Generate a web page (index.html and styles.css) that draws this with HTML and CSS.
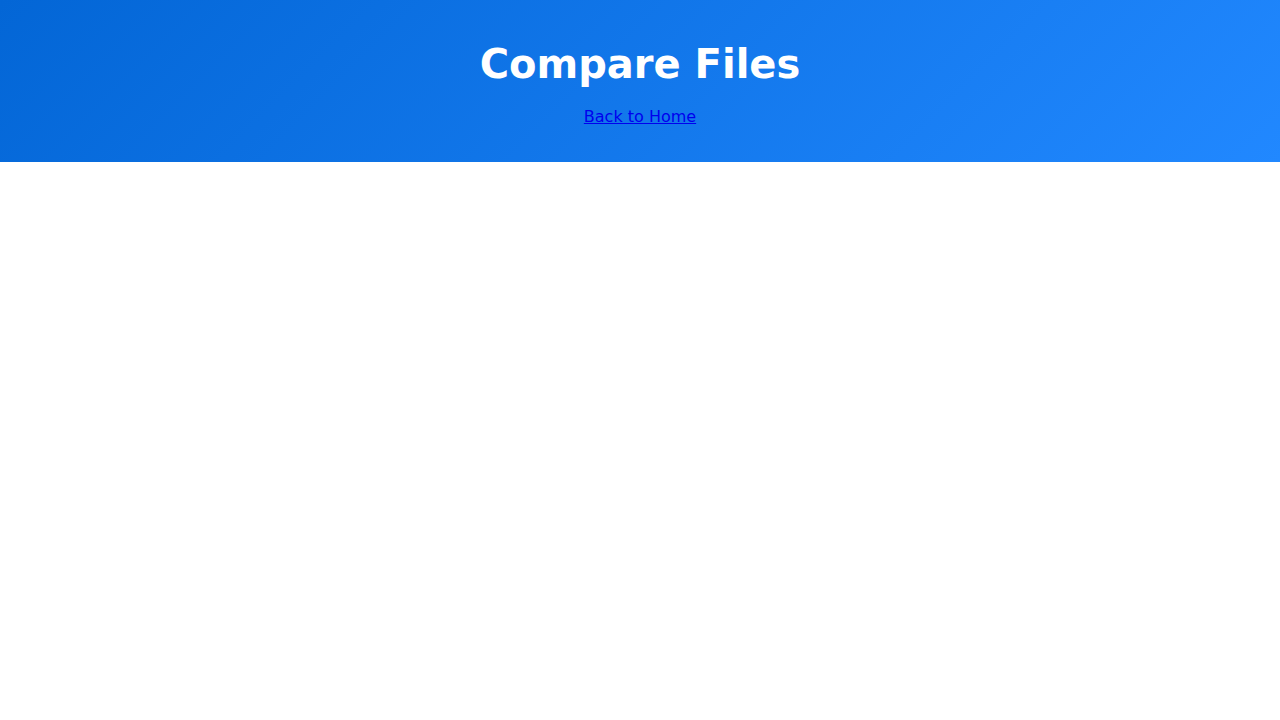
FILE: index.html
```html
<!DOCTYPE html>
<html lang="en">
<head>
<meta charset="utf-8">
<title>Compare Files</title>
<link rel="stylesheet" href="styles.css">
</head>
<body>
<header class="hero">
  <h1 class="hero-title">Compare Files</h1>
  <a class="hero-link" href="#">Back to Home</a>
</header>
</body>
</html>
```
FILE: styles.css
```css
html, body {
  margin: 0;
  padding: 0;
  background: #ffffff;
  font-family: "DejaVu Sans", sans-serif;
}
.hero {
  background: linear-gradient(135deg, #0366d6, #2188ff);
  color: #ffffff;
  text-align: center;
  padding: 41px 0 36px;
  display: flex;
  flex-direction: column;
  align-items: center;
}
.hero-title {
  margin: 0 0 20px;
  font-size: 40px;
  font-weight: bold;
}
.hero-link {
  color: #0000ee;
  font-size: 16px;
}
```
